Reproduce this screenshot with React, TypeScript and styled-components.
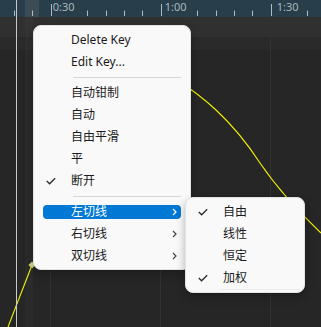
import React from "react";
import styled, { createGlobalStyle } from "styled-components";

const Global = createGlobalStyle`
  html, body { margin: 0; padding: 0; background: #262626; }
  body { font-family: "Noto Sans", "Noto Sans CJK SC", sans-serif; }
`;

const Stage = styled.div`
  position: relative;
  width: 321px;
  height: 327px;
  overflow: hidden;
  display: flex;
  flex-direction: column;
  background: #262626;
`;

const Ruler = styled.div`
  position: relative;
  height: 17px;
  flex: none;
  background: #283f4b;
  display: flex;
  padding-left: 50.7px;
`;

const RulerSvg = styled.svg`
  position: absolute;
  inset: 0;
`;

const RulerSegment = styled.div`
  position: relative;
  width: 110px;
  flex: none;
  padding-left: 2px;
  font-family: "Noto Sans", sans-serif;
  font-size: 11px;
  line-height: 13px;
  color: #a9b6bd;
`;

const Band = styled.div<{ $h: number; $bg: string }>`
  height: ${(p) => p.$h}px;
  flex: none;
  background: ${(p) => p.$bg};
`;

const Graph = styled.div`
  flex: 1;
  background: #262626;
`;

const Overlay = styled.svg`
  position: absolute;
  left: 0;
  top: 17px;
  pointer-events: none;
`;

const Playhead = styled.div`
  position: absolute;
  left: 16px;
  top: 0;
  bottom: 0;
  width: 1px;
  background: #c9c9c9;
`;

const Menu = styled.div<{ $x: number; $y: number; $w: number }>`
  position: absolute;
  left: ${(p) => p.$x}px;
  top: ${(p) => p.$y}px;
  width: ${(p) => p.$w}px;
  box-sizing: border-box;
  padding: 3px 0 2px;
  background: #f9f9f9;
  border: 1px solid #e3e3e3;
  border-radius: 8px;
  box-shadow: 0 4px 10px rgba(0, 0, 0, 0.28);
  font-family: "Noto Sans", "Noto Sans CJK SC", sans-serif;
  font-size: 12px;
  color: #1a1a1a;
`;

const Row = styled.div`
  height: 22px;
  padding: 0 9px;
  display: flex;
  align-items: center;
`;

const RowInner = styled.div<{ $active?: boolean }>`
  flex: 1;
  height: 14px;
  border-radius: 4px;
  display: grid;
  grid-template-columns: 28px 1fr auto;
  align-items: center;
  background: ${(p) => (p.$active ? "#0078d4" : "transparent")};
  color: ${(p) => (p.$active ? "#ffffff" : "#1a1a1a")};
  padding-right: 4px;
`;

const Label = styled.span`
  white-space: nowrap;
  line-height: 14px;
`;

const CheckCell = styled.span`
  display: flex;
  align-items: center;
  padding-left: 3px;
`;

const Separator = styled.div`
  height: 1px;
  margin: 4px 9px 4px 39px;
  background: #d6d6d6;
`;

const FootLine = styled.div`
  height: 1px;
  margin: 0 4px 0 34px;
  background: #ececec;
`;

const Check = () => (
  <svg width="10" height="8" viewBox="0 0 10 8">
    <polyline points="0.8,4 3.6,6.8 9.2,1.2" fill="none" stroke="#2b2b2b" strokeWidth="1.3" />
  </svg>
);

const Chevron = ({ color }: { color: string }) => (
  <svg width="5" height="8" viewBox="0 0 5 8">
    <polyline points="1,1 4,4 1,7" fill="none" stroke={color} strokeWidth="1.2" />
  </svg>
);

type Item = { label: string; checked?: boolean; sub?: boolean; active?: boolean };

const MenuItem = ({ item }: { item: Item }) => (
  <Row>
    <RowInner $active={item.active}>
      <CheckCell>{item.checked ? <Check /> : null}</CheckCell>
      <Label>{item.label}</Label>
      {item.sub ? <Chevron color={item.active ? "#ffffff" : "#444"} /> : <span />}
    </RowInner>
  </Row>
);

const ticks: { x: number; major: boolean }[] = [];
for (let k = -2; k <= 15; k++) {
  const m = ((k % 6) + 6) % 6;
  if (m === 1) continue;
  ticks.push({ x: 50.7 + k * 18.333, major: m === 0 });
}

export default function App() {
  const group1: Item[] = [{ label: "Delete Key" }, { label: "Edit Key..." }];
  const group2: Item[] = [
    { label: "自动钳制" },
    { label: "自动" },
    { label: "自由平滑" },
    { label: "平" },
    { label: "断开", checked: true },
  ];
  const group3: Item[] = [
    { label: "左切线", sub: true, active: true },
    { label: "右切线", sub: true },
    { label: "双切线", sub: true },
  ];
  const subItems: Item[] = [
    { label: "自由", checked: true },
    { label: "线性" },
    { label: "恒定" },
    { label: "加权", checked: true },
  ];

  return (
    <>
      <Global />
      <Stage>
        <Ruler>
          <RulerSvg width="321" height="17">
            <rect x="25" y="0" width="14" height="17" fill="#3a4d57" />
            {ticks.map((t, i) => (
              <line
                key={i}
                x1={Math.round(t.x) + 0.5}
                x2={Math.round(t.x) + 0.5}
                y1={t.major ? 4 : 10.5}
                y2={16}
                stroke="#aebbc2"
                strokeWidth="1"
              />
            ))}
          </RulerSvg>
          <RulerSegment>0:30</RulerSegment>
          <RulerSegment>1:00</RulerSegment>
          <RulerSegment>1:30</RulerSegment>
        </Ruler>
        <Band $h={20} $bg="#303030" />
        <Band $h={13} $bg="#2a2a2a" />
        <Graph />
        <Overlay width="321" height="310">
          <rect x="25" y="0" width="8" height="310" fill="#ffffff" opacity="0.025" />
          {[50.5, 160.5, 270.5].map((x) => (
            <line key={x} x1={x} x2={x} y1="0" y2="310" stroke="#323232" strokeWidth="1" />
          ))}
          <path
            d="M 176 62 C 200 78, 230 100, 260 146 C 275 168, 300 196, 321 216"
            fill="none"
            stroke="#f2f200"
            strokeWidth="1.1"
          />
          <line x1="32" y1="248" x2="8" y2="310" stroke="#f2f200" strokeWidth="1.1" />
          <rect x="29.5" y="245.5" width="5" height="5" fill="#d9d98a" transform="rotate(45 32 248)" />
        </Overlay>
        <Playhead />

        <Menu $x={33} $y={25} $w={158}>
          {group1.map((it) => (
            <MenuItem key={it.label} item={it} />
          ))}
          <Separator />
          {group2.map((it) => (
            <MenuItem key={it.label} item={it} />
          ))}
          <Separator />
          {group3.map((it) => (
            <MenuItem key={it.label} item={it} />
          ))}
        </Menu>

        <Menu $x={185} $y={197} $w={120}>
          {subItems.map((it) => (
            <MenuItem key={it.label} item={it} />
          ))}
          <FootLine />
        </Menu>
      </Stage>
    </>
  );
}
